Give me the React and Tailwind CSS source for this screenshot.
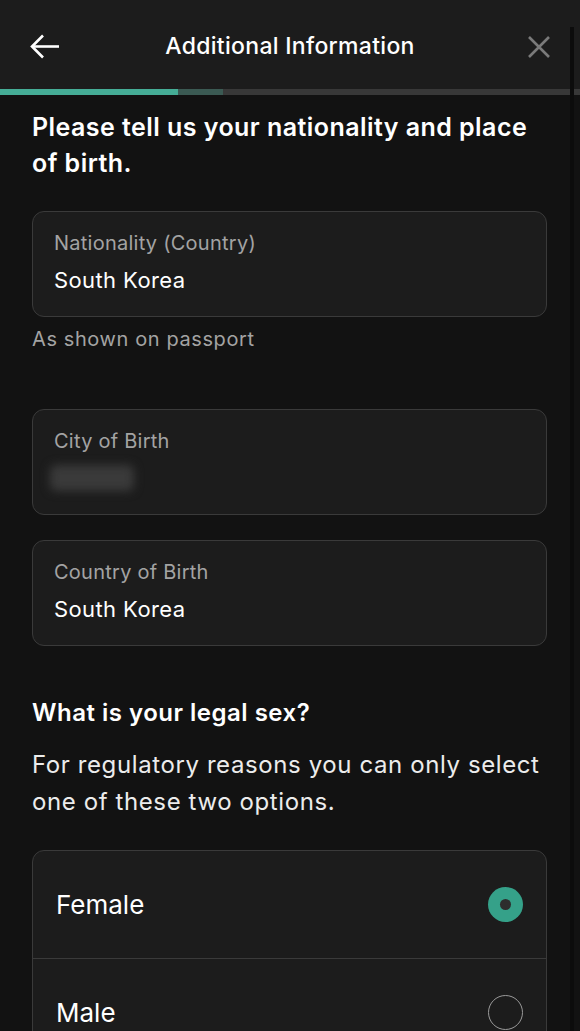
import React, { useState } from "react";

function Field({ label, value, blurred }) {
  return (
    <div className="h-[106px] rounded-xl border border-[#3a3a3a] bg-[#1c1c1c] px-[21px] pt-[19px]">
      <div className="text-[20px] leading-[24px] tracking-[0.25px] text-[#a3a3a3]">{label}</div>
      {blurred ? (
        <div className="mt-[12px] -ml-[4px] h-[26px] w-[84px] rounded-md bg-[#3a3a3a] blur-[5px]" />
      ) : (
        <div className="mt-[12px] text-[22px] leading-[26px] tracking-[0.4px] text-white">{value}</div>
      )}
    </div>
  );
}

function Radio({ checked }) {
  return checked ? (
    <div className="flex h-[35px] w-[35px] items-center justify-center rounded-full bg-[#35a189]">
      <div className="h-[11px] w-[11px] rounded-full bg-[#2d2d2d]" />
    </div>
  ) : (
    <div className="h-[35px] w-[35px] rounded-full border-[1.5px] border-[#9a9a9a]" />
  );
}

export default function App() {
  const [sex, setSex] = useState("female");
  const options = [
    { label: "Female", value: "female" },
    { label: "Male", value: "male" },
  ];

  return (
    <div
      className="relative h-[1031px] w-[580px] overflow-hidden bg-[#121212] text-white"
      style={{ fontFamily: "Inter, 'Noto Sans', sans-serif" }}
    >
      {/* Header */}
      <div className="bg-[#1c1c1c]">
        <div className="flex h-[89px] items-center justify-between pl-[30px] pr-[30px] pt-[4px]">
          <div className="flex w-[30px] justify-start">
            <svg width="30" height="25" viewBox="0 0 30 25" fill="none" stroke="white" strokeWidth="2.6" strokeLinecap="butt">
              <path d="M29 12.5H2.5" />
              <path d="M13 1.5L2 12.5L13 23.5" />
            </svg>
          </div>
          <div className="text-[23px] font-medium tracking-[0.3px]">Additional Information</div>
          <div className="flex w-[30px] justify-end">
            <svg width="22" height="22" viewBox="0 0 22 22" fill="none" stroke="#7a7a7a" strokeWidth="2.6">
              <path d="M1 1L21 21M21 1L1 21" />
            </svg>
          </div>
        </div>
        <div className="flex h-[6px] bg-[#383838]">
          <div className="w-[178px] bg-[#45ad96]" />
          <div className="w-[45px] bg-[#3b5a53]" />
        </div>
      </div>

      {/* scrollbar track */}
      <div className="absolute right-[6px] top-[27px] h-[1004px] w-[4px] bg-[#0c0c0c]" />

      <div className="px-[32px] pr-[33px] pt-[14px]">
        <h1 className="text-[25px] font-semibold leading-[36px] tracking-[0.45px]">
          Please tell us your nationality and place of birth.
        </h1>

        <div className="mt-[30px]">
          <Field label="Nationality (Country)" value="South Korea" />
          <div className="mt-[10px] text-[20px] leading-[24px] tracking-[0.6px] text-[#a3a3a3]">As shown on passport</div>
        </div>

        <div className="mt-[58px] flex flex-col gap-[25px]">
          <Field label="City of Birth" blurred />
          <Field label="Country of Birth" value="South Korea" />
        </div>

        <h2 className="mt-[52px] text-[24px] font-semibold leading-[30px] tracking-[0.5px]">What is your legal sex?</h2>
        <p className="mt-[18px] text-[24px] leading-[37px] tracking-[0.6px] text-[#ececec]">
          For regulatory reasons you can only select one of these two options.
        </p>

        <div className="mt-[30px] overflow-hidden rounded-xl border border-[#3a3a3a] bg-[#1c1c1c]">
          {options.map((o, i) => (
            <button
              key={o.value}
              type="button"
              onClick={() => setSex(o.value)}
              className={[
                "flex h-[107px] w-full items-center justify-between pl-[23px] pr-[23px] text-left",
                i > 0 ? "border-t border-[#3a3a3a]" : "",
              ].join(" ")}
            >
              <span className="text-[26px] text-white">{o.label}</span>
              <Radio checked={sex === o.value} />
            </button>
          ))}
        </div>
      </div>
    </div>
  );
}
